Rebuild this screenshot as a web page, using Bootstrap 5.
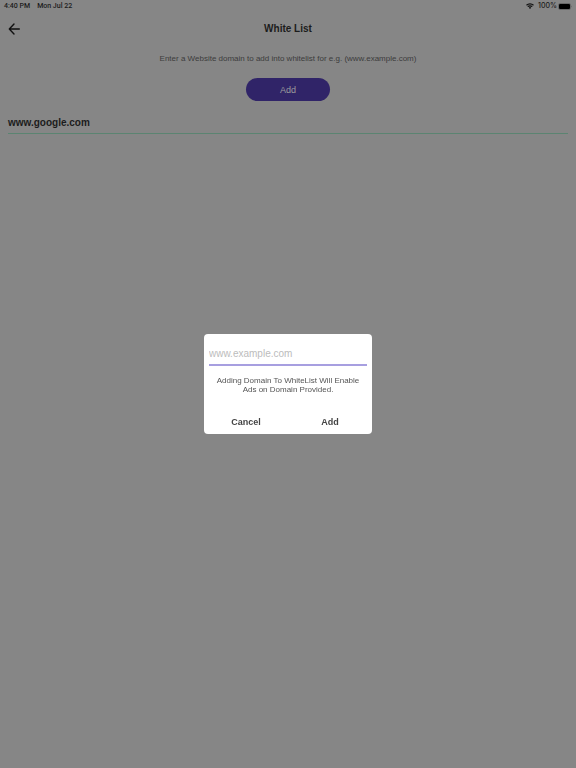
<!DOCTYPE html>
<html lang="en">
<head>
<meta charset="utf-8">
<meta name="viewport" content="width=device-width, initial-scale=1">
<title>White List</title>
<link href="https://cdn.jsdelivr.net/npm/bootstrap@5.3.0/dist/css/bootstrap.min.css" rel="stylesheet">
<style>
body { background: #868686; color: #1c1c1c; font-family: "Liberation Sans", Arial, sans-serif; font-size: 8px; line-height: 12px; }
.status-bar { font-family: Roboto, Inter, sans-serif; font-size: 7px; font-weight: 500; line-height: 12px; }
.status-time { gap: 7px; }
.battery-level { font-family: Inter, sans-serif; }
.title-bar { display: grid; grid-template-columns: 32px 1fr 32px; height: 33px; }
.screen-title, .domain-name { font-size: 10px; font-weight: 700; line-height: 16px; }
.hint { color: #3c3c3c; }
.add-area { padding-top: 13px; }
.add-btn { --bs-btn-bg: #302468; --bs-btn-color: #9c9c9c; --bs-btn-hover-bg: #3a2c7c; --bs-btn-hover-color: #b0b0b0; width: 84px; height: 23px; font-size: 9px; line-height: 12px; }
.domain-list { padding-top: 14px; }
.domain-item { border-bottom: 1px solid #5b8471; padding-bottom: 2px; }
.dialog-wrap { pointer-events: none; }
.dialog-box { pointer-events: auto; width: 168px; padding: 10px 0 2px; border-radius: 4px; }
.domain-field { padding: 0 5px; }
.domain-input, .domain-input:focus { border-bottom: 2px solid #a79fe0; font-size: 10px; line-height: 20px; background: transparent; box-shadow: none; }
.domain-input::placeholder { color: #bcbcbc; opacity: 1; }
.dialog-note { margin: 10px 0 18px; padding: 0 12px; line-height: 9px; color: #555; }
.dialog-btn { --bs-btn-color: #444; --bs-btn-hover-color: #222; font-size: 9px; font-weight: 700; line-height: 12px; }
</style>
</head>
<body>
<header>
  <div class="status-bar d-flex justify-content-between px-1">
    <div class="status-time d-flex"><span>4:40 PM</span><span>Mon Jul 22</span></div>
    <div class="d-flex align-items-center">
      <svg class="me-1" width="8" height="6" viewBox="0 0 16 12" aria-hidden="true"><g fill="none" stroke="#111" stroke-width="2.400"><path d="M1 4.500a10 10 0 0 1 14 0M3.600 7.400a6.200 6.200 0 0 1 8.800 0"/></g><path d="M5.600 9.300a3.500 3.500 0 0 1 4.800 0L8 12z" fill="#111"/></svg>
      <span class="battery-level">100%</span>
      <svg width="15" height="7" viewBox="0 0 15 7" aria-hidden="true"><rect x="1.500" y=".5" width="12" height="6" rx="1.500" fill="none" stroke="#555" stroke-width=".6"/><rect x="2" y="1" width="11" height="5" rx="1" fill="#000"/><path d="M14.200 2.500q1 1 0 2z" fill="#555"/></svg>
    </div>
  </div>
  <div class="title-bar align-items-center">
    <button type="button" class="btn border-0 p-0 ps-2 d-flex" aria-label="Back">
      <svg width="12" height="12" viewBox="0 0 12 12" fill="none" stroke="#111" stroke-width="1.400" stroke-linecap="round" stroke-linejoin="round"><path d="M11.300 6H1.300M6 1L1.300 6l4.700 5"/></svg>
    </button>
    <h1 class="screen-title text-center m-0">White List</h1>
  </div>
</header>
<main class="px-2">
  <p class="hint text-center mt-2 mb-0">Enter a Website domain to add into whitelist for e.g. (www.example.com)</p>
  <div class="add-area d-flex justify-content-center"><button type="button" class="btn add-btn rounded-pill border-0 p-0">Add</button></div>
  <ul class="domain-list list-unstyled m-0"><li class="domain-item domain-name">www.google.com</li></ul>
</main>
<div class="dialog-wrap position-fixed top-0 start-0 w-100 h-100 d-flex align-items-center justify-content-center">
  <form class="dialog-box bg-white" role="dialog" aria-label="Add domain">
    <div class="domain-field"><input class="domain-input form-control border-top-0 border-start-0 border-end-0 rounded-0 p-0" type="text" aria-label="Website domain" placeholder="www.example.com"></div>
    <p class="dialog-note text-center">Adding Domain To WhiteList Will Enable Ads on Domain Provided.</p>
    <div class="row g-0">
      <div class="col-6"><button type="button" class="btn dialog-btn w-100 border-0 p-0 py-1">Cancel</button></div>
      <div class="col-6"><button type="button" class="btn dialog-btn w-100 border-0 p-0 py-1">Add</button></div>
    </div>
  </form>
</div>
<script src="https://cdn.jsdelivr.net/npm/bootstrap@5.3.0/dist/js/bootstrap.bundle.min.js"></script>
</body>
</html>
